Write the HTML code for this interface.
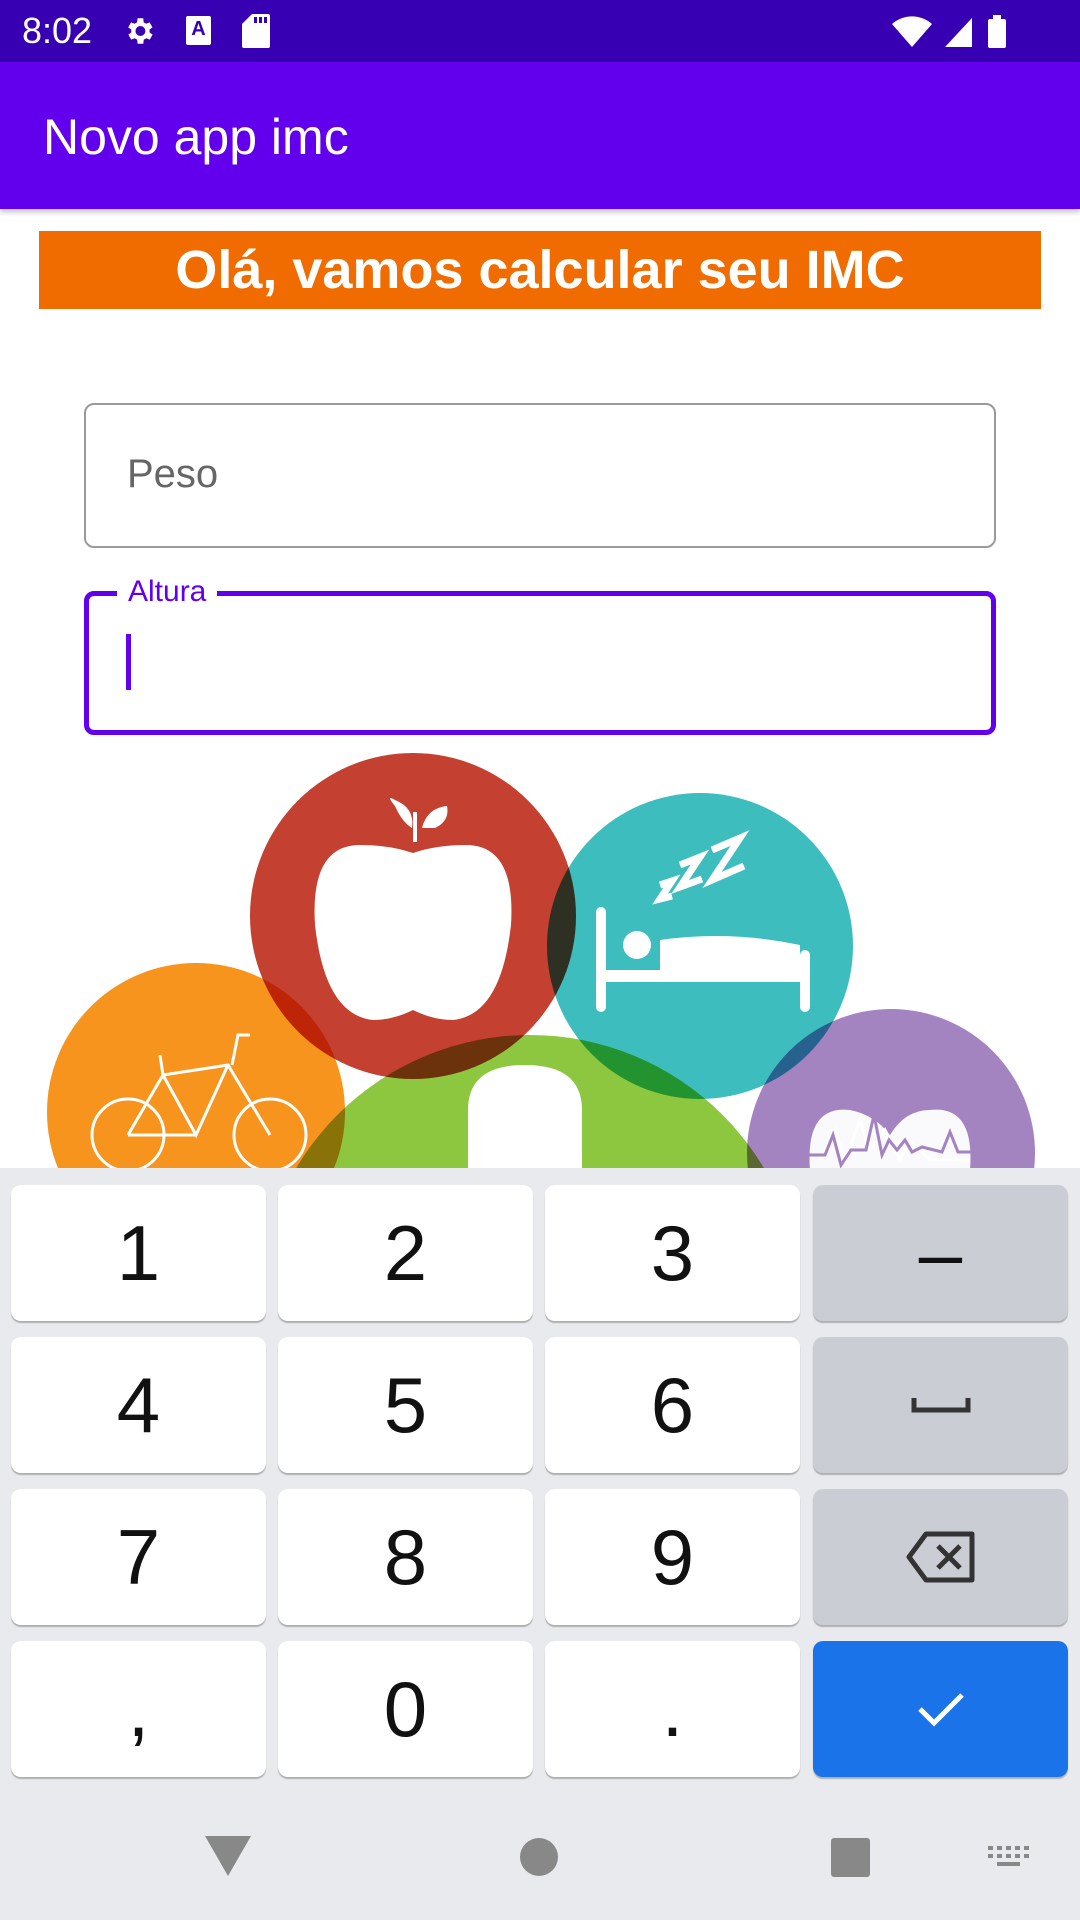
<!DOCTYPE html>
<html><head><meta charset="utf-8"><style>
*{margin:0;padding:0;box-sizing:border-box}
body{width:1080px;height:1920px;overflow:hidden;background:#fff;font-family:"Liberation Sans",Roboto,sans-serif;position:relative}
.abs{position:absolute}
.key{position:absolute;width:255px;height:136px;background:#fff;border-radius:10px;box-shadow:0 2px 1px rgba(0,0,0,.25);font-size:78px;color:#111;display:flex;align-items:center;justify-content:center}
.g{background:#cbcdd4}
</style></head><body>
<div class="abs" style="left:0;top:0;width:1080px;height:62px;background:#3700B3"></div>
<div class="abs" style="left:22px;top:10px;color:#fff;font-size:36px">8:02</div>
<svg class="abs" style="left:122px;top:14px" width="34" height="34" viewBox="0 0 24 24"><path fill="#fff" d="M19.4 13a7.5 7.5 0 000-2l2.1-1.6-2-3.5-2.5 1a7 7 0 00-1.7-1L15 3h-4l-.4 2.9a7 7 0 00-1.7 1l-2.5-1-2 3.5L6.6 11a7.5 7.5 0 000 2l-2.1 1.6 2 3.5 2.5-1a7 7 0 001.7 1L11 21h4l.4-2.9a7 7 0 001.7-1l2.5 1 2-3.5zM13 15.5a3.5 3.5 0 110-7 3.5 3.5 0 010 7z"/></svg>
<div class="abs" style="left:186px;top:16px;width:25px;height:29px;background:#fff;border-radius:2px;color:#3700B3;font-size:20px;font-weight:bold;text-align:center;line-height:26px">A</div>
<svg class="abs" style="left:242px;top:14px" width="28" height="34" viewBox="0 0 28 34"><path fill="#fff" d="M10 0h16a2 2 0 012 2v30a2 2 0 01-2 2H2a2 2 0 01-2-2V10z"/><rect x="12" y="3" width="3" height="6" fill="#3700B3"/><rect x="17" y="3" width="3" height="6" fill="#3700B3"/><rect x="22" y="3" width="3" height="6" fill="#3700B3"/></svg>
<svg class="abs" style="left:890px;top:14px" width="120" height="34" viewBox="0 0 120 34"><path fill="#fff" d="M2 10a30 30 0 0140 0L22 33z"/><path fill="#fff" d="M82 4v29H55z"/><rect x="98" y="5" width="18" height="29" rx="2" fill="#fff"/><rect x="103" y="1" width="8" height="5" fill="#fff"/></svg>
<div class="abs" style="left:0;top:62px;width:1080px;height:147px;background:#6200EE;box-shadow:0 3px 5px rgba(0,0,0,.25)"></div>
<div class="abs" style="left:43px;top:108px;color:#fff;font-size:50px">Novo app imc</div>
<div class="abs" style="left:39px;top:231px;width:1002px;height:78px;background:#F06C00;color:#fff;font-weight:bold;font-size:54px;text-align:center;line-height:78px">Olá, vamos calcular seu IMC</div>
<div class="abs" style="left:84px;top:403px;width:912px;height:145px;border:2.5px solid #9a9a9a;border-radius:10px"></div>
<div class="abs" style="left:127px;top:452px;color:#666;font-size:40px">Peso</div>
<div class="abs" style="left:84px;top:591px;width:912px;height:144px;border:5px solid #6200EE;border-radius:10px"></div>
<div class="abs" style="left:117px;top:575px;background:#fff;padding:0 11px;color:#6200EE;font-size:30px">Altura</div>
<div class="abs" style="left:126px;top:634px;width:5px;height:56px;background:#6200EE"></div>
<svg class="abs" style="left:0;top:740px" width="1080" height="430" viewBox="0 740 1080 430">
<g style="mix-blend-mode:multiply">
<circle cx="196" cy="1112" r="149" fill="#F7941D"/>
</g>
<circle cx="530" cy="1307" r="272" fill="#8DC63F" style="mix-blend-mode:multiply"/>
<circle cx="413" cy="916" r="163" fill="#C44030" style="mix-blend-mode:multiply"/>
<circle cx="700" cy="946" r="153" fill="#3DBDBD" style="mix-blend-mode:multiply"/>
<circle cx="891" cy="1153" r="144" fill="#A384C0" style="mix-blend-mode:multiply"/>
<path fill="#fff" d="M468 1168V1110q0-45 57-45 57 0 57 45v58z"/>
<path fill="#fff" d="M360 845q-50 0-45 80 10 90 58 95 20 0 40-10 20 10 40 10 48-5 58-95 5-80-45-80-30 0-53 8-23-8-53-8z"/>
<path fill="#fff" d="M395 806q-10-12 0-6 20 8 17 28-10-6-17-22zM422 828q5-20 25-22 3 15-12 22z"/>
<rect x="413" y="812" width="4" height="30" fill="#fff"/>
<g fill="#fff"><rect x="596" y="907" width="10" height="105" rx="5"/><rect x="800" y="950" width="10" height="62" rx="5"/><rect x="600" y="970" width="205" height="12"/><circle cx="637" cy="945" r="14"/><path d="M660 940q70-10 140 5v25H660z"/></g>
<g fill="none" stroke="#fff" stroke-width="7"><path d="M660 885l12-4-12 18 12-3"/><path d="M680 865l20-8-20 30 22-8"/><path d="M712 850l28-12-28 42 32-14"/></g>
<g fill="none" stroke="#fff" stroke-width="3"><circle cx="128" cy="1135" r="36"/><circle cx="270" cy="1135" r="36"/><path d="M128 1135l35-60 65-10 42 70M163 1075l33 60 32-70M196 1135h-68M163 1075l-3-20M232 1065l6-30 12 0"/></g>
<g fill="none" stroke="#fff" stroke-width="3"><path d="M820 1160l15-30 10 30 15-40 10 30 15-20 15 30 10-20 20 20h40"/></g>
<path fill="#fff" d="M810 1170q-5-65 40-60 25 5 40 25 15-25 40-25 45-5 40 60z" opacity=".95"/>
<path fill="none" stroke="#A384C0" stroke-width="3" d="M800 1155h25l8-20 8 30 10-15 15 0 8-35 8 40 7-15 8 10 8-10 7 12 10-5 20 5 8-20 8 20h20"/>
</svg>
<div class="abs" style="left:0;top:1168px;width:1080px;height:752px;background:#E8EAED"></div>
<div class="key" style="left:11px;top:1185px">1</div>
<div class="key" style="left:278px;top:1185px">2</div>
<div class="key" style="left:545px;top:1185px">3</div>
<div class="key g" style="left:813px;top:1185px">–</div>
<div class="key" style="left:11px;top:1337px">4</div>
<div class="key" style="left:278px;top:1337px">5</div>
<div class="key" style="left:545px;top:1337px">6</div>
<div class="key g" style="left:813px;top:1337px"><svg width="60" height="20"><path d="M3 3v12h54V3" fill="none" stroke="#333" stroke-width="5"/></svg></div>
<div class="key" style="left:11px;top:1489px">7</div>
<div class="key" style="left:278px;top:1489px">8</div>
<div class="key" style="left:545px;top:1489px">9</div>
<div class="key g" style="left:813px;top:1489px"><svg width="70" height="52" viewBox="0 0 70 52"><path d="M20 3h46v46H20L3 26z" fill="none" stroke="#333" stroke-width="5" stroke-linejoin="round"/><path d="M32 15l22 22M54 15L32 37" stroke="#333" stroke-width="5"/></svg></div>
<div class="key" style="left:11px;top:1641px">,</div>
<div class="key" style="left:278px;top:1641px">0</div>
<div class="key" style="left:545px;top:1641px">.</div>
<div class="key" style="left:813px;top:1641px;background:#1A73E8"><svg width="50" height="40"><path d="M4 20l14 14L46 6" fill="none" stroke="#fff" stroke-width="5"/></svg></div>
<svg class="abs" style="left:205px;top:1836px" width="46" height="40"><path d="M0 0h46L23 40z" fill="#888"/></svg>
<div class="abs" style="left:520px;top:1838px;width:38px;height:38px;border-radius:50%;background:#888"></div>
<div class="abs" style="left:831px;top:1838px;width:39px;height:39px;border-radius:3px;background:#888"></div>
<svg class="abs" style="left:988px;top:1846px" width="42" height="22"><g fill="#888"><rect x="0" y="0" width="5" height="4"/><rect x="9" y="0" width="5" height="4"/><rect x="18" y="0" width="5" height="4"/><rect x="27" y="0" width="5" height="4"/><rect x="36" y="0" width="5" height="4"/><rect x="0" y="8" width="5" height="4"/><rect x="9" y="8" width="5" height="4"/><rect x="18" y="8" width="5" height="4"/><rect x="27" y="8" width="5" height="4"/><rect x="36" y="8" width="5" height="4"/><rect x="9" y="16" width="23" height="4"/></g></svg>
</body></html>
